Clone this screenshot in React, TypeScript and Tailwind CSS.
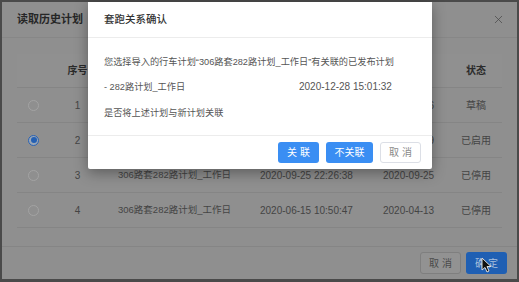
import { X } from 'lucide-react'

interface PlanRow {
  id: number
  name: string
  createdAt: string
  startDate: string
  status: string
}

const rows: PlanRow[] = [
  { id: 1, name: '306路套282路计划_工作日', createdAt: '2021-01-05 09:12:20', startDate: '2021-01-06', status: '草稿' },
  { id: 2, name: '306路套282路计划_工作日', createdAt: '2020-12-28 15:01:32', startDate: '2020-12-29', status: '已启用' },
  { id: 3, name: '306路套282路计划_工作日', createdAt: '2020-09-25 22:26:38', startDate: '2020-09-25', status: '已停用' },
  { id: 4, name: '306路套282路计划_工作日', createdAt: '2020-06-15 10:50:47', startDate: '2020-04-13', status: '已停用' },
]

const SELECTED_ID = 2

const cols = 'grid grid-cols-[33px_55px_142px_123px_80px_1fr] items-center'

function Radio({ checked }: { checked: boolean }) {
  if (checked) {
    return (
      <span className="flex h-[11px] w-[11px] items-center justify-center rounded-full border border-[#2a63b4] bg-[#9aa6b6]">
        <span className="h-[6px] w-[6px] rounded-full bg-[#2460b3]" />
      </span>
    )
  }
  return <span className="block h-[11px] w-[11px] rounded-full border border-[#a3a3a3]" />
}

function Cursor() {
  return (
    <svg width="11" height="16" viewBox="0 0 11 16" className="absolute left-[479px] top-[255px]">
      <path d="M1 1 L1 13 L4 10.5 L6 15 L8 14 L6 9.5 L10 9.5 Z" fill="#111" stroke="#ddd" strokeWidth="1" strokeLinejoin="round" />
    </svg>
  )
}

export default function App() {
  return (
    <div className="h-[282px] w-[519px] bg-[#4a4a4a] pb-[3px] pl-[2px] pr-[2px] pt-[2px] font-['Liberation_Sans','Noto_Sans_CJK_SC',sans-serif]">
      <div className="relative flex h-full flex-col bg-[#8f8f8f]">
        {/* dimmed history dialog */}
        <div className="flex h-[36px] shrink-0 items-center justify-between border-b border-[#878787] pl-[15px] pr-[12px]">
          <span className="text-[11px] font-bold text-[#262626]">读取历史计划</span>
          <X className="h-[13px] w-[13px] text-[#4a4a4a]" strokeWidth={1.4} />
        </div>

        <div className="flex-1 px-[15px] pt-[16px] text-[10px] text-[#444]">
          <div className={`${cols} h-[34px] border-b border-[#858585] bg-[#909090] font-bold text-[#2b2b2b]`}>
            <span />
            <span className="text-center">序号</span>
            <span />
            <span />
            <span />
            <span className="text-center">状态</span>
          </div>
          {rows.map((row) => (
            <div key={row.id} className={`${cols} h-[35px] border-b border-[#858585]`}>
              <span className="flex justify-center">
                <Radio checked={row.id === SELECTED_ID} />
              </span>
              <span className="text-center">{row.id}</span>
              <span className="pl-[13px] text-[9.5px]">{row.id > 2 ? row.name : ''}</span>
              <span className="pl-[13px]">{row.id > 2 ? row.createdAt : ''}</span>
              <span className="pl-[13px]">{row.startDate}</span>
              <span className="text-center">{row.status}</span>
            </div>
          ))}
        </div>

        <div className="flex h-[33px] shrink-0 items-center justify-end gap-[5px] border-t border-[#858585] pr-[10px] text-[10px]">
          <button className="h-[22px] w-[41px] rounded-[3px] border border-[#7f7f7f] bg-[#929292] text-[#4a4a4a]">取 消</button>
          <button className="h-[22px] w-[41px] rounded-[3px] bg-[#1f5fb3] text-[#a9bfdc]">确 定</button>
        </div>

        <Cursor />

        {/* confirm modal */}
        <div className="absolute left-[86px] top-0 flex w-[344px] flex-col rounded-b-[2px] bg-white shadow-[0_4px_14px_rgba(0,0,0,0.35)]">
          <div className="flex h-[36px] items-center border-b border-[#ececec] pl-[16px] text-[10.5px] font-medium text-[#333]">
            套跑关系确认
          </div>
          <div className="flex flex-col pb-[15px] pl-[16px] pt-[17px] text-[9.2px] leading-[14px] text-[#555]">
            <p>您选择导入的行车计划“306路套282路计划_工作日”有关联的已发布计划</p>
            <div className="mt-[11px] flex">
              <span className="w-[195px]">- 282路计划_工作日</span>
              <span className="text-[10px]">2020-12-28 15:01:32</span>
            </div>
            <p className="mt-[12px]">是否将上述计划与新计划关联</p>
          </div>
          <div className="flex h-[34px] items-center justify-end gap-[7px] border-t border-[#ececec] pr-[11px] text-[10px]">
            <button className="h-[21px] w-[41px] rounded-[3px] bg-[#3a8ef3] text-white">关 联</button>
            <button className="h-[21px] w-[47px] rounded-[3px] bg-[#3a8ef3] text-white">不关联</button>
            <button className="h-[21px] w-[41px] rounded-[3px] border border-[#dcdfe6] bg-white text-[#8a8a8a]">取 消</button>
          </div>
        </div>
      </div>
    </div>
  )
}
